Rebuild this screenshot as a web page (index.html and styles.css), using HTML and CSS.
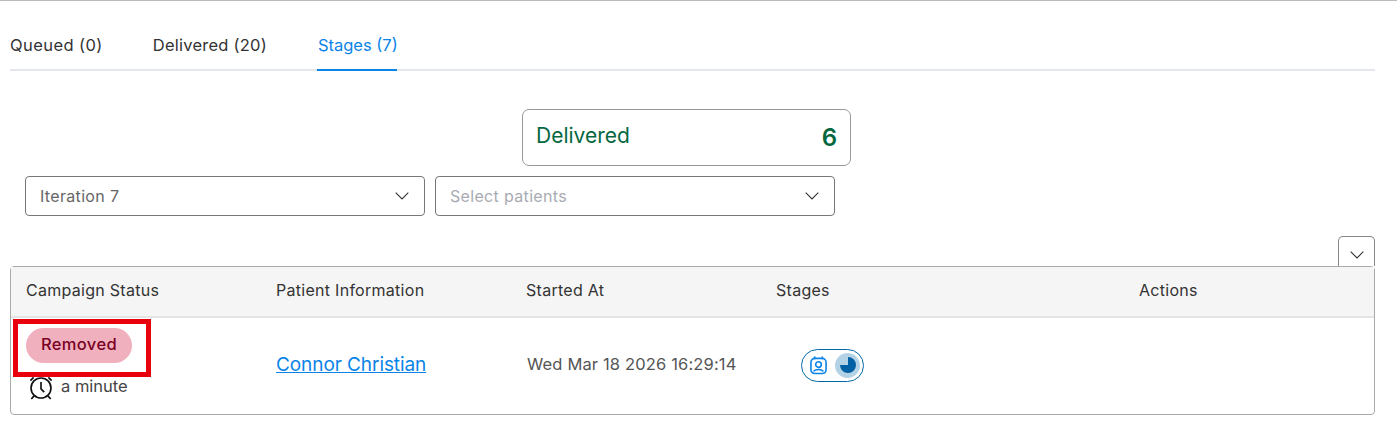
FILE: index.html
```html
<!DOCTYPE html>
<html lang="en">
<head>
<meta charset="utf-8">
<title>Stages</title>
<link rel="stylesheet" href="styles.css">
</head>
<body>
<main class="page">
  <nav class="tabs">
    <a class="tab">Queued (0)</a>
    <a class="tab">Delivered (20)</a>
    <a class="tab active">Stages (7)</a>
  </nav>
  <div class="card"><span>Delivered</span><strong>6</strong></div>
  <div class="filters">
    <div class="select"><span>Iteration 7</span><svg class="chev" viewBox="0 0 14 8"><path d="M.7.7 7 7 13.3.7"/></svg></div>
    <div class="select placeholder"><span>Select patients</span><svg class="chev" viewBox="0 0 14 8"><path d="M.7.7 7 7 13.3.7"/></svg></div>
  </div>
  <div class="toggle-row"><button class="toggle"><svg class="chev" viewBox="0 0 14 8"><path d="M.7.7 7 7 13.3.7"/></svg></button></div>
  <section class="table">
    <div class="row head">
      <div>Campaign Status</div><div>Patient Information</div><div>Started At</div><div>Stages</div><div>Actions</div>
    </div>
    <div class="row body">
      <div class="status">
        <span class="pill">Removed</span>
        <span class="since">
          <svg class="clock" viewBox="0 0 26 26"><circle cx="13" cy="13" r="10.800"/><path d="M13 6.500V14l3.500 3.500M5 1.500 1.500 5M21 1.500 24.500 5M5.500 21.500l-3 3.500M20.500 21.500l3 3.500"/></svg>
          a minute
        </span>
        <span class="highlight"></span>
      </div>
      <div class="cell-up"><a class="link">Connor Christian</a></div>
      <div class="date cell-up">Wed Mar 18 2026 16:29:14</div>
      <div class="stages-cell">
        <span class="stages">
          <svg class="robot" viewBox="0 0 18 20"><rect x="1" y="3" width="16" height="16" rx="4"/><circle cx="9" cy="9.500" r="3"/><path d="M5 1v3M13 1v3M4 17c1-3 9-3 10 0"/></svg>
          <span class="pie"><svg viewBox="0 0 18 18"><path d="M9 1a8 8 0 1 1-8 8h8z"/></svg></span>
        </span>
      </div>
      <div></div>
    </div>
  </section>
</main>
</body>
</html>
```
FILE: styles.css
```css
* { box-sizing: border-box; }
html, body { margin: 0; background: #fff; }
body { font-family: Inter, "Liberation Sans", sans-serif; color: #333; font-size: 16px; }
.page { border-top: 1px solid #bbb; padding: 0 22px 0 10px; height: 433px; overflow: hidden; }
.tabs { display: flex; gap: 50px; height: 70px; border-bottom: 2px solid #e4e7eb; padding-top: 32px; }
.tab { height: 38px; line-height: 24px; font-size: 16.500px; letter-spacing: .23px; color: #333; white-space: nowrap; }
.tab:first-child { letter-spacing: .42px; }
.tab.active { color: #0a84e8; border-bottom: 2px solid #0a84e8; width: 80px; padding-left: 1px; letter-spacing: 0; }
.card { margin: 38px 0 0 512px; width: 329px; height: 57px; border: 1px solid #999; border-radius: 7px; display: flex; justify-content: space-between; align-items: center; padding: 0 13px; color: #04673f; font-size: 21px; }
.card span { padding-bottom: 4px; }
.card strong { font-size: 24px; font-weight: 600; }
.filters { display: flex; gap: 10px; margin: 10px 0 0 15px; }
.select { width: 400px; height: 40px; border: 1px solid #777; border-radius: 4px; display: flex; justify-content: space-between; align-items: center; padding: 0 15px 0 14px; color: #666; font-size: 16px; letter-spacing: .33px; }
.select span { padding-bottom: 1px; }
.select.placeholder { color: #a8abb2; }
.chev { width: 14px; height: 8px; fill: none; stroke: #333; stroke-width: 1.100; display: block; }
.toggle-row { display: flex; justify-content: flex-end; margin-top: 20px; }
.toggle { width: 37px; height: 30px; background: #fff; border: 1px solid #888; border-bottom: 0; border-radius: 5px 5px 0 0; padding: 6px 0 0 11px; }
.table { border: 1px solid #aaa; border-radius: 4px; height: 149px; }
.row { display: grid; grid-template-columns: 250px 250px 250px 363px 1fr; padding-left: 15px; align-items: center; }
.head { height: 51px; background: #f5f5f5; border-bottom: 2px solid #e4e4e4; font-size: 16px; letter-spacing: .28px; padding-bottom: 4px; }
.body { height: 96px; }
.status { position: relative; display: flex; flex-direction: column; align-items: flex-start; height: 96px; padding-top: 10px; }
.pill { width: 106px; height: 35px; padding-bottom: 3px; border-radius: 18px; background: #f0b0bd; color: #7a0024; display: flex; align-items: center; justify-content: center; font-size: 16.500px; font-weight: 500; letter-spacing: .35px; }
.since { display: flex; align-items: center; gap: 8px; margin: 9px 0 0 3px; line-height: 24px; font-size: 16.500px; color: #444; }
.clock { width: 24px; height: 24px; margin-top: 4px; fill: none; stroke: #111; stroke-width: 1.800; }
.highlight { position: absolute; left: -13px; top: 1px; width: 138px; height: 58px; border: 5px solid #e8000c; }
.cell-up { padding-bottom: 4px; }
.stages-cell { padding-bottom: 2px; }
.link { color: #0a84e8; text-decoration: underline; font-size: 19px; letter-spacing: -.08px; }
.date { color: #555; font-size: 16.500px; letter-spacing: .15px; padding-left: 1px; }
.stages { display: inline-flex; align-items: center; gap: 8px; width: 63px; height: 33px; margin-left: 25px; padding: 0 3px 0 8px; border: 1px solid #0268a8; border-radius: 17px; }
.robot { width: 17px; height: 20px; fill: none; stroke: #0a84e8; stroke-width: 1.700; flex: none; }
.pie { width: 25px; height: 25px; border-radius: 50%; background: #b3d2e6; display: flex; align-items: center; justify-content: center; flex: none; }
.pie svg { width: 18px; height: 18px; fill: #0261a4; }
```
